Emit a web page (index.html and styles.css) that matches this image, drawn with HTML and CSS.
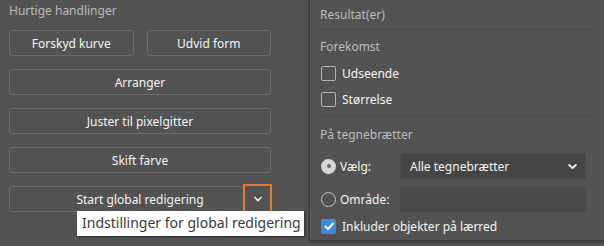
FILE: index.html
```html
<!DOCTYPE html>
<html>
<head>
<meta charset="utf-8">
<link rel="stylesheet" href="styles.css">
</head>
<body>
<div class="panel">
  <div class="title">Hurtige handlinger</div>
  <div class="row">
    <button class="btn half">Forskyd kurve</button>
    <button class="btn half">Udvid form</button>
  </div>
  <button class="btn full">Arranger</button>
  <button class="btn full">Juster til pixelgitter</button>
  <button class="btn full">Skift farve</button>
  <div class="split">
    <button class="btn main">Start global redigering</button>
    <button class="chev"><svg width="10" height="6" viewBox="0 0 10 6"><path d="M1.5 1 L5 4.5 L8.5 1" fill="none" stroke="#f0f0f0" stroke-width="1.6"/></svg></button>
    <div class="tooltip">Indstillinger for global redigering</div>
  </div>
</div>

<div class="popover">
  <div class="ptitle">Resultat(er)</div>
  <div class="sep"></div>
  <div class="ptitle sub">Forekomst</div>
  <label class="opt"><span class="cb"></span>Udseende</label>
  <label class="opt"><span class="cb"></span>Størrelse</label>
  <div class="sep sep2"></div>
  <div class="ptitle sub2">På tegnebrætter</div>
  <div class="line">
    <span class="radio on"></span><span class="lbl">Vælg:</span>
    <div class="select">Alle tegnebrætter<svg width="11" height="7" viewBox="0 0 11 7"><path d="M1.5 1.5 L5.5 5 L9.5 1.5" fill="none" stroke="#f0f0f0" stroke-width="1.8"/></svg></div>
  </div>
  <div class="line">
    <span class="radio"></span><span class="lbl">Område:</span>
    <div class="input"></div>
  </div>
  <label class="opt last"><span class="cb checked"><svg width="12" height="10" viewBox="0 0 12 10"><path d="M2 5 L5 8 L10.5 2" fill="none" stroke="#fff" stroke-width="2"/></svg></span>Inkluder objekter på lærred</label>
</div>
</body>
</html>
```

FILE: styles.css
```css
html, body {
  margin: 0;
  padding: 0;
  width: 604px;
  height: 246px;
  overflow: hidden;
  background: #535353;
  font-family: "Noto Sans", "Open Sans", sans-serif;
}
.panel {
  padding: 2px 0 0 9px;
  width: 262px;
  display: flex;
  flex-direction: column;
}
.title {
  color: #b9b9b9;
  font-size: 12px;
  height: 18px;
  line-height: 18px;
  margin-bottom: 10px;
}
.btn {
  box-sizing: border-box;
  height: 26px;
  background: #535353;
  border: 1px solid #6c6c6c;
  border-radius: 3px;
  color: #f4f4f4;
  font-family: inherit;
  font-size: 12px;
  padding: 0;
  margin: 0 0 13px 0;
}
.row {
  display: flex;
  gap: 13px;
}
.half { width: 125px; }
.full { width: 262px; }
.split {
  position: relative;
  display: flex;
  width: 262px;
}
.main {
  width: 262px;
}
.chev {
  position: absolute;
  left: 234px;
  top: -2px;
  box-sizing: border-box;
  width: 29px;
  height: 29px;
  border: 2px solid #e8792b;
  background: #535353;
  padding: 0;
  display: flex;
  align-items: center;
  justify-content: center;
}
.tooltip {
  position: absolute;
  left: 68px;
  top: 25px;
  box-sizing: border-box;
  width: 227px;
  height: 25px;
  background: #fff;
  color: #3a3a3a;
  font-size: 14px;
  line-height: 23px;
  padding-left: 5px;
  box-shadow: 1px 1px 2px rgba(0,0,0,0.5);
  white-space: nowrap;
}
.popover {
  position: absolute;
  left: 309px;
  top: -4px;
  width: 300px;
  height: 245px;
  box-sizing: border-box;
  background: #535353;
  border: 1px solid #3a3a3a;
  box-shadow: inset 1px 1px 0 #5e5e5e, 0 1px 2px rgba(0,0,0,0.4);
  padding: 4px 12px 0 10px;
}
.ptitle {
  color: #bdbdbd;
  font-size: 12px;
  height: 28px;
  line-height: 28px;
}
.sep {
  height: 1px;
  background: #4a4a4a;
  margin: 0 0 0 0;
  width: 275px;
}
.sub { margin-top: 2px; height: 28px; line-height: 30px; }
.opt {
  display: flex;
  align-items: center;
  height: 26px;
  color: #f4f4f4;
  font-size: 12px;
}
.cb {
  box-sizing: border-box;
  width: 15px;
  height: 15px;
  border: 1px solid #b4b4b4;
  border-radius: 2px;
  margin: 0 6px 0 1px;
  display: flex;
  align-items: center;
  justify-content: center;
}
.cb.checked {
  background: #3b8cdf;
  border-color: #3b8cdf;
}
.sep2 { margin-top: 4px; }
.sub2 { margin-top: 2px; height: 34px; line-height: 32px; }
.line {
  display: flex;
  align-items: center;
  height: 26px;
  margin-bottom: 7px;
}
.radio {
  box-sizing: border-box;
  width: 15px;
  height: 15px;
  border-radius: 50%;
  border: 1px solid #c8c8c8;
  margin: 0 4px 0 1px;
}
.radio.on {
  background: #d6d6d6;
  border: 4px solid #d6d6d6;
  position: relative;
}
.radio.on::after {
  content: "";
  position: absolute;
  width: 4px;
  height: 4px;
  margin: -1px 0 0 -1px;
  border-radius: 50%;
  background: #6a6a6a;
  left: 2.5px;
  top: 2.5px;
}
.lbl {
  color: #f4f4f4;
  font-size: 12px;
  width: 60px;
}
.select, .input {
  box-sizing: border-box;
  width: 186px;
  height: 26px;
  border-radius: 2px;
}
.select {
  background: #454545;
  border: 1px solid #4c4c4c;
  color: #f4f4f4;
  font-size: 12px;
  display: flex;
  align-items: center;
  justify-content: space-between;
  padding: 0 7px 0 9px;
}
.input {
  background: #4b4b4b;
}
.last { margin-top: -6px; }
```
